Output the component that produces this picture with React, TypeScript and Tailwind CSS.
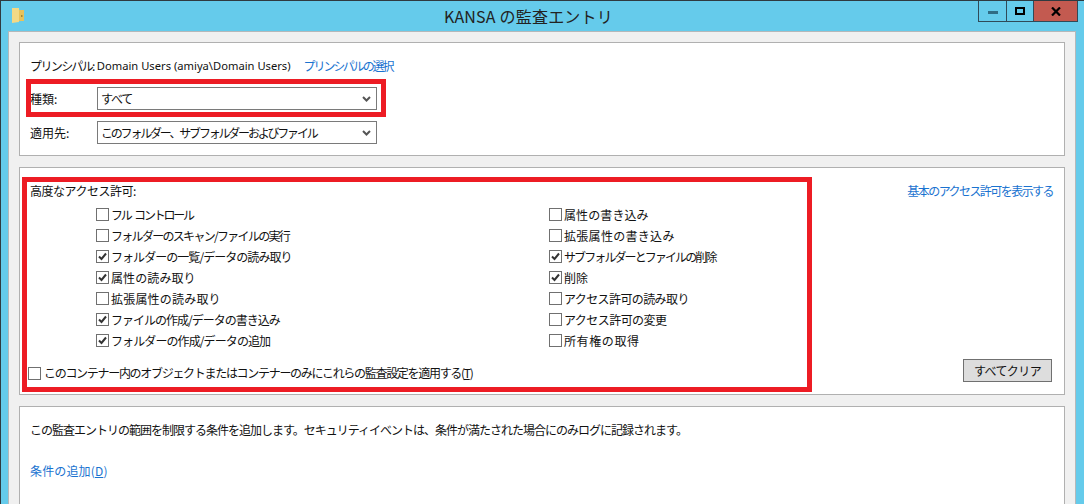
const left = [
  { label: "フル コントロール", checked: false, tracking: "tracking-[-2.2px] [word-spacing:3px]" },
  { label: "フォルダーのスキャン/ファイルの実行", checked: false, tracking: "tracking-[-1.7px]" },
  { label: "フォルダーの一覧/データの読み取り", checked: true, tracking: "tracking-[-0.95px]" },
  { label: "属性の読み取り", checked: true, tracking: "tracking-[0.1px]" },
  { label: "拡張属性の読み取り", checked: false, tracking: "tracking-[0.2px]" },
  { label: "ファイルの作成/データの書き込み", checked: true, tracking: "tracking-[-1px]" },
  { label: "フォルダーの作成/データの追加", checked: true, tracking: "tracking-[-0.9px]" },
];

const right = [
  { label: "属性の書き込み", checked: false, tracking: "tracking-[0.1px]" },
  { label: "拡張属性の書き込み", checked: false, tracking: "tracking-[0.3px]" },
  { label: "サブフォルダーとファイルの削除", checked: true, tracking: "tracking-[-1.9px]" },
  { label: "削除", checked: true, tracking: "tracking-[0.1px]" },
  { label: "アクセス許可の読み取り", checked: false, tracking: "tracking-[-0.6px]" },
  { label: "アクセス許可の変更", checked: false, tracking: "tracking-[-0.55px]" },
  { label: "所有権の取得", checked: false, tracking: "tracking-[0.6px]" },
];

function Checkbox({ checked }: { checked: boolean }) {
  return (
    <span className="w-[13px] h-[13px] shrink-0 border border-[#707070] bg-white flex items-center justify-center">
      {checked && (
        <svg width="11" height="11" viewBox="0 0 11 11">
          <path d="M2 5.5 L4.5 8 L9 2.5" fill="none" stroke="#333" strokeWidth="2" />
        </svg>
      )}
    </span>
  );
}

function CheckRow({ label, checked, tracking }: { label: string; checked: boolean; tracking: string }) {
  return (
    <div className="h-[21px] flex items-center gap-[2px]">
      <Checkbox checked={checked} />
      <span className={tracking}>{label}</span>
    </div>
  );
}

function Select({ value, tracking }: { value: string; tracking: string }) {
  return (
    <div className="w-[280px] h-[23px] border border-[#7a7a7a] bg-white flex items-center justify-between pl-[3px] pr-[5px]">
      <span className={tracking}>{value}</span>
      <svg width="9" height="6" viewBox="0 0 9 6">
        <path d="M1 1 L4.5 4.5 L8 1" fill="none" stroke="#555" strokeWidth="2" />
      </svg>
    </div>
  );
}

export default function App() {
  return (
    <div
      className="relative w-[1084px] h-[504px] overflow-hidden bg-[#65cbeb] border-t border-l border-[#2f3a40] text-[12px] text-[#111] flex flex-col"
      style={{ fontFamily: '"Noto Sans CJK JP", "Noto Sans", sans-serif' }}
    >
      {/* title bar */}
      <div className="h-[30px] shrink-0 relative flex items-center justify-center">
        <svg className="absolute left-[10px] top-[6px]" width="14" height="17" viewBox="0 0 14 17">
          <path d="M1 1 H8 V15 L1 16 Z" fill="#f3d985" />
          <path d="M8 3 H13 V14 H8 Z" fill="#e8c25a" />
          <path d="M10 8 h1.5 v2 h-1.5 Z" fill="#a88a30" />
        </svg>
        <span className="text-[16px] text-[#222] ml-[-28px] tracking-[0.2px]">KANSA の監査エントリ</span>
        <div className="absolute right-[6px] top-0 h-[21px] w-[100px] border-b border-l border-r border-[#2f4a58] flex">
          <div className="w-[28px] border-r border-[#2f4a58] flex items-center justify-center">
            <span className="w-[10px] h-[3px] bg-[#2f6c85] mt-[3px]" />
          </div>
          <div className="w-[26px] flex items-center justify-center">
            <span className="w-[10px] h-[8px] border-2 border-black" />
          </div>
          <div className="flex-1 bg-[#c35a50] border-l border-[#2f4a58] flex items-center justify-center">
            <svg width="10" height="9" viewBox="0 0 10 9">
              <path d="M1 0.5 L9 8.5 M9 0.5 L1 8.5" stroke="#000" strokeWidth="2.2" />
            </svg>
          </div>
        </div>
      </div>

      {/* client area */}
      <div className="flex-1 ml-[7px] mr-[8px] bg-[#f0f0f0] border-t border-l border-r border-[#b4b8ba] pt-[10px] px-[10px] flex flex-col gap-[11px]">
        <section className="h-[114px] shrink-0 bg-white border border-[#b0b0b0] px-[10px] pt-[13px]">
          <div className="h-[20px] flex items-center">
            <span className="tracking-[-1.6px]">プリンシパル:</span>
            <span className="ml-[3px] text-[11.2px]" style={{ fontFamily: '"Noto Sans", sans-serif' }}>Domain Users (amiya\Domain Users)</span>
            <span className="ml-[13px] text-[#1a73d0] tracking-[-2.1px]">プリンシパルの選択</span>
          </div>
          <div className="flex items-center mt-[11px] h-[23px]">
            <span className="w-[67px]">種類:</span>
            <Select value="すべて" tracking="tracking-[-1.2px]" />
          </div>
          <div className="flex items-center mt-[11px] h-[23px]">
            <span className="w-[67px]">適用先:</span>
            <Select value="このフォルダー、サブフォルダーおよびファイル" tracking="tracking-[-2.2px]" />
          </div>
        </section>

        <section className="relative h-[228px] shrink-0 bg-white border border-[#b0b0b0] pl-[10px] pt-[13px]">
          <div className="h-[20px] flex items-center tracking-[-0.5px]">高度なアクセス許可:</div>
          <div className="flex mt-[3px] pl-[66px]">
            <div className="w-[453px]">
              {left.map((item) => (
                <CheckRow key={item.label} {...item} />
              ))}
            </div>
            <div>
              {right.map((item) => (
                <CheckRow key={item.label} {...item} />
              ))}
            </div>
          </div>
          <div className="flex items-center gap-[3px] mt-[12px] ml-[-2px] tracking-[-1.3px] h-[20px]">
            <Checkbox checked={false} />
            <span>このコンテナー内のオブジェクトまたはコンテナーのみにこれらの監査設定を適用する(<u>T</u>)</span>
          </div>
          <span className="absolute right-[11px] top-[14px] text-[#1a73d0] tracking-[-1.55px]">基本のアクセス許可を表示する</span>
          <button className="absolute right-[12px] bottom-[12px] w-[89px] h-[23px] bg-[#dddddd] border border-[#707070] tracking-[-0.6px]">すべてクリア</button>
        </section>

        <section className="flex-1 bg-white border border-[#b0b0b0] border-b-0 px-[10px] pt-[13px]">
          <div className="h-[20px] flex items-center tracking-[-1px]">この監査エントリの範囲を制限する条件を追加します。セキュリティイベントは、条件が満たされた場合にのみログに記録されます。</div>
          <div className="mt-[22px] text-[#1a73d0] tracking-[0.15px]">条件の追加(<u>D</u>)</div>
        </section>
      </div>

      {/* red annotation boxes */}
      <div className="absolute left-[25px] top-[78px] w-[360px] h-[38px] border-[5px] border-[#ed1c24]" />
      <div className="absolute left-[21px] top-[176px] w-[790px] h-[215px] border-[5px] border-[#ed1c24]" />
    </div>
  );
}
